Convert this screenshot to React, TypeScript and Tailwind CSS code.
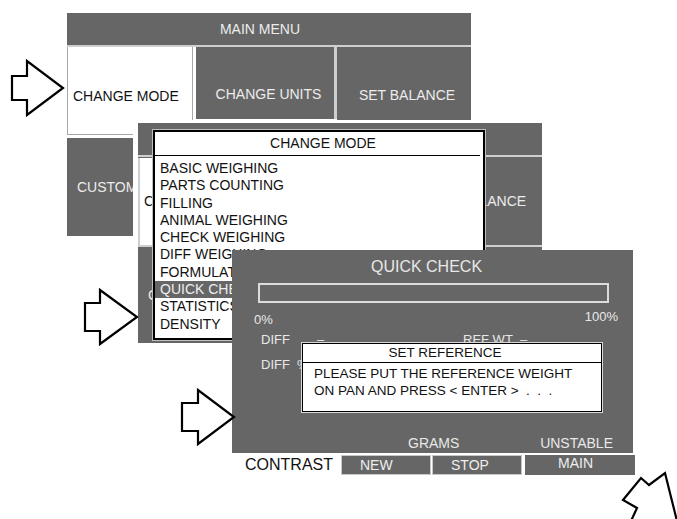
import React from "react";

const FONT = { fontFamily: '"Liberation Sans", Arial, sans-serif' };

function MainMenu() {
  return (
    <div className="absolute left-[67px] top-[13px] w-[404px]">
      <div className="flex h-[32px] items-center justify-center bg-[#666666] pr-[18px] text-[14px] text-[#ececec]">
        MAIN MENU
      </div>
      <div className="h-[2px] bg-[#cfcfcf]" />
      <div className="flex items-start">
        <div className="flex h-[88px] w-[126px] items-end border border-t-0 border-[#a8a8a8] bg-white pb-[30px] pl-[5px] text-[14px] leading-[16px] text-[#111]">
          CHANGE MODE
        </div>
        <div className="h-[72px] w-[3px] bg-white" />
        <div className="flex h-[72px] w-[138px] items-end justify-center bg-[#666666] pb-[17px] pl-[7px] text-[14px] leading-[16px] text-[#ececec]">
          CHANGE UNITS
        </div>
        <div className="h-[72px] w-[3px] bg-[#cfcfcf]" />
        <div className="flex h-[73px] w-[134px] items-end justify-center bg-[#666666] pb-[17px] pl-[6px] text-[14px] leading-[16px] text-[#ececec]">
          SET BALANCE
        </div>
      </div>
      <div className="mt-[3px] flex">
        <div className="flex h-[98px] w-[126px] items-center overflow-hidden whitespace-nowrap bg-[#666666] pl-[10px] text-[14px] text-[#ececec]">
          CUSTOMIZE
        </div>
      </div>
    </div>
  );
}

const MODES = [
  "BASIC WEIGHING",
  "PARTS COUNTING",
  "FILLING",
  "ANIMAL WEIGHING",
  "CHECK WEIGHING",
  "DIFF WEIGHING",
  "FORMULATION",
  "QUICK CHECK",
  "STATISTICS",
  "DENSITY",
];

function ChangeModeWindow() {
  return (
    <div className="absolute left-[133px] top-[120px] border-l-[5px] border-t-[3px] border-white">
      <div className="relative h-[220px] w-[404px] overflow-hidden bg-[#666666]">
        <div className="h-[32px]" />
        <div className="h-[2px] bg-[#cfcfcf]" />
        <div className="mt-px flex items-start">
          <div className="flex h-[87px] w-[126px] items-center border-l-2 border-[#cfcfcf] bg-white pl-[4px] text-[14px] text-[#111]">
            CHANGE MODE
          </div>
          <div className="w-[3px]" />
          <div className="h-[87px] w-[138px]" />
          <div className="h-[87px] w-[3px] bg-[#cfcfcf]" />
          <div className="flex h-[87px] w-[134px] items-center justify-center pl-[6px] text-[14px] text-[#ececec]">
            SET BALANCE
          </div>
        </div>
        <div className="h-[2px] bg-[#cfcfcf]" />
        <div className="flex h-[96px] w-[126px] items-center whitespace-nowrap pl-[10px] text-[14px] text-[#ececec]">
          CUSTOMIZE
        </div>

        <div className="absolute left-[15px] top-[7px] h-[210px] w-[332px] border-2 border-black bg-white shadow-[0_0_0_1px_#bdbdbd]">
          <div className="flex h-[23px] items-center justify-center pl-[8px] text-[14px] text-[#111]">
            CHANGE MODE
          </div>
          <div className="mr-[3px] h-px bg-black" />
          <div className="pt-[4px]">
            {MODES.map((m) => (
              <div
                key={m}
                className={
                  m === "QUICK CHECK"
                    ? "h-[17.3px] whitespace-nowrap bg-[#666666] pl-[5px] text-[14px] leading-[17.3px] text-[#eeeeee]"
                    : "h-[17.3px] whitespace-nowrap pl-[5px] text-[14px] leading-[17.3px] text-[#111]"
                }
              >
                {m}
              </div>
            ))}
          </div>
        </div>
      </div>
    </div>
  );
}

function QuickCheckWindow() {
  return (
    <div className="absolute left-[232px] top-[250px] w-[405px]">
      <div className="relative flex h-[203px] w-[401px] flex-col bg-[#666666] text-[#e8e8e8]">
        <div className="pr-[12px] pt-[8px] text-center text-[16px] leading-[18px]">QUICK CHECK</div>
        <div className="ml-[26px] mt-[7px] h-[20px] w-[351px] border-2 border-[#dcdcdc]" />
        <div className="mt-[9px] flex justify-between pl-[22px] pr-[15px] text-[13px] leading-[15px]">
          <span>0%</span>
          <span className="-mt-[3px]">100%</span>
        </div>
        <div className="mt-[5px] flex pl-[29px] text-[13px] leading-[15px]">
          <span className="w-[56px]">DIFF</span>
          <span className="w-[146px]">–</span>
          <span>REF WT&nbsp;&nbsp;–</span>
        </div>
        <div className="mt-[10px] flex pl-[29px] text-[13px] leading-[15px]">
          <span className="whitespace-pre">DIFF  %</span>
        </div>
        <div className="mt-auto flex justify-between pb-[2px] pl-[176px] pr-[20px] text-[14px] leading-[16px]">
          <span>GRAMS</span>
          <span>UNSTABLE</span>
        </div>

        <div className="absolute left-[70px] top-[93px] h-[69px] w-[300px] border border-black bg-white text-[13.5px] text-[#111] shadow-[0_0_0_1px_#d8d8d8]">
          <div className="flex h-[19px] items-center justify-center border-b border-black pr-[14px]">
            SET REFERENCE
          </div>
          <div className="pl-[11px] pt-[1.5px] leading-[17px]">
            <div className="whitespace-pre">PLEASE PUT THE REFERENCE WEIGHT</div>
            <div className="whitespace-pre">ON PAN AND PRESS &lt; ENTER &gt;  .  .  .</div>
          </div>
        </div>
      </div>
      <div className="mt-[2px] flex items-center">
        <span className="ml-[13px] w-[96px] text-[16px] leading-[18px] text-[#111]">CONTRAST</span>
        <div className="flex h-[20px] w-[90px] items-center border border-[#c8c8c8] bg-[#666666] pl-[18px] text-[14px] text-[#eeeeee]">
          NEW
        </div>
        <div className="ml-px flex h-[20px] w-[90px] items-center border border-[#c8c8c8] bg-[#666666] pl-[18px] text-[14px] text-[#eeeeee]">
          STOP
        </div>
        <div className="ml-[3px] flex h-[20px] w-[110px] items-start bg-[#666666] pl-[33px] text-[14px] leading-[16px] text-[#eeeeee]">
          MAIN
        </div>
      </div>
    </div>
  );
}

function Arrows() {
  const s = { fill: "white", stroke: "black", strokeWidth: 2.2, strokeLinejoin: "miter" as const };
  return (
    <svg className="pointer-events-none absolute left-0 top-0" width="677" height="519" viewBox="0 0 677 519">
      <polygon points="12,76 27,76 27,61 63,88 27,115 27,100 12,100" {...s} />
      <polygon points="85,303 100,303 100,290 137,317 100,344 100,331 85,331" {...s} />
      <polygon points="182,403 198,403 198,390 234,417 198,444 198,431 182,431" {...s} />
      <polyline points="631,521 637,508 623,500 641,478 649,485 665,473 675,513 677,521" {...s} />
    </svg>
  );
}

export default function App() {
  return (
    <div className="relative h-[519px] w-[677px] overflow-hidden bg-white" style={FONT}>
      <MainMenu />
      <ChangeModeWindow />
      <QuickCheckWindow />
      <Arrows />
    </div>
  );
}
